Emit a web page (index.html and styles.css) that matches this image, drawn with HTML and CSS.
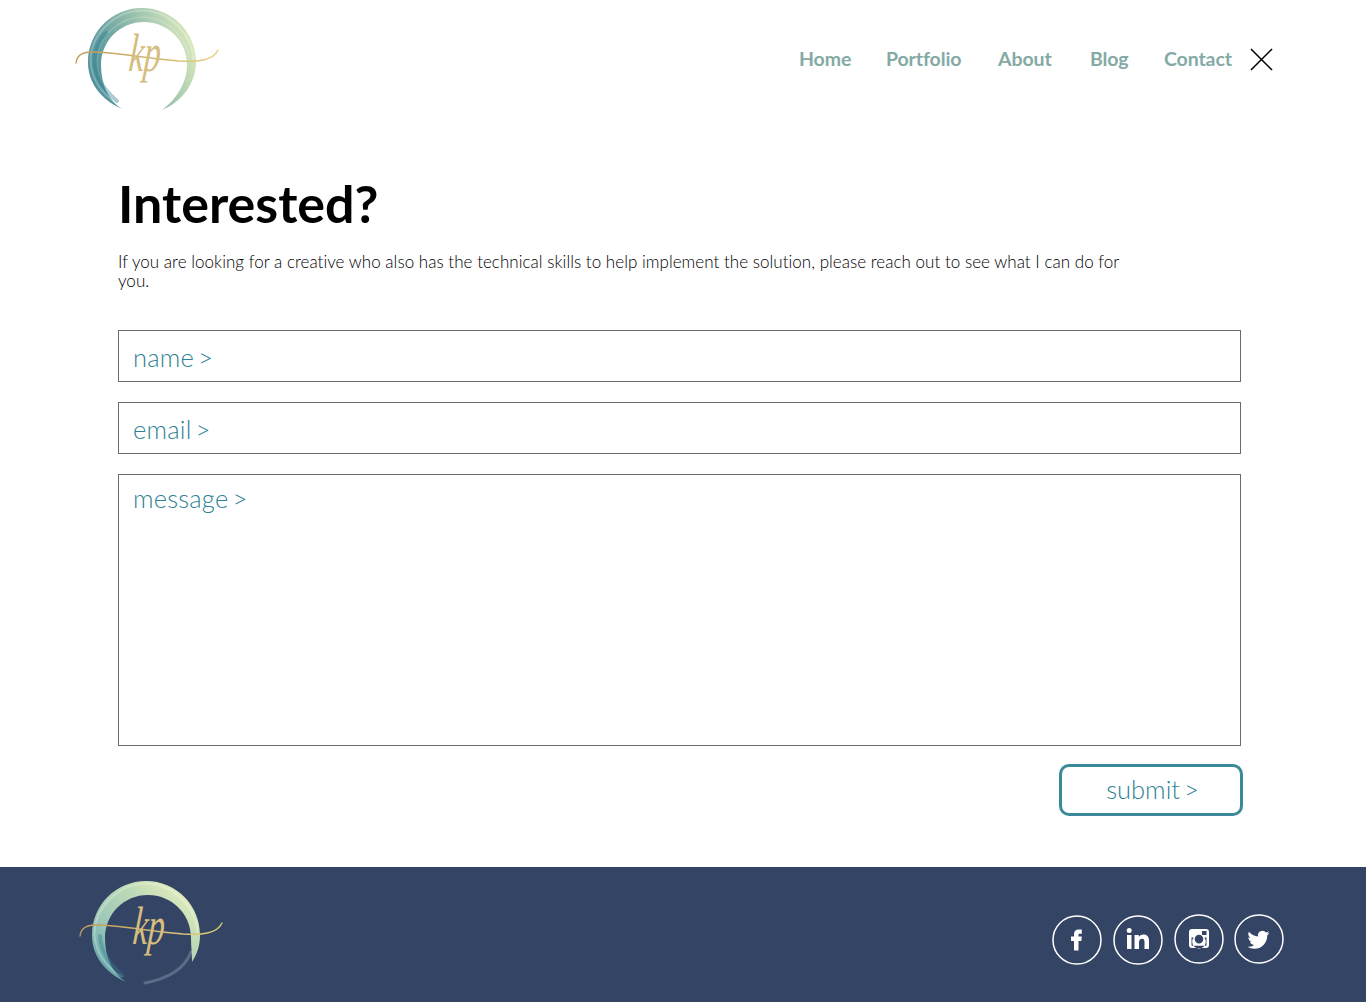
FILE: index.html
```html
<!DOCTYPE html>
<html lang="en">
<head>
<meta charset="utf-8">
<title>Contact</title>
<link rel="stylesheet" href="styles.css">
</head>
<body>
<header class="site-header">
  <a class="logo" href="#" aria-label="kp">
    <svg class="logo-svg" viewBox="0 0 146 104" width="146" height="104">
      <defs>
        <linearGradient id="ringA" x1="0" y1="0.7" x2="1" y2="0.35">
          <stop offset="0" stop-color="#4a8e99"/>
          <stop offset="0.3" stop-color="#6ea5a3"/>
          <stop offset="0.65" stop-color="#a5c9b0"/>
          <stop offset="1" stop-color="#dce9bd"/>
        </linearGradient>
        <linearGradient id="goldA" x1="0" y1="0" x2="1" y2="0">
          <stop offset="0" stop-color="#c09a55"/>
          <stop offset="0.55" stop-color="#d3b976"/>
          <stop offset="1" stop-color="#e3cf75"/>
        </linearGradient>
      </defs>
      <path class="ring-fill-a" d="M47 102C25 92 13 75 13 55C13 25 37 1 67 1C97 1 121 25 121 55C121 76 107 95 87 103C102 92 112 75 112 58C112 33 92 15 69 15C45 15 26 34 26 58C26 78 34 94 47 102Z"/>
      <path class="ring-streak" d="M43 97C27 87 17 73 15.500 55C15 28 39 4 67 3.500C93 3.500 118 26 118.500 55"/>
      <path class="ring-streak ring-streak-thin" d="M39 90C28 80 23 70 22 56C22 30 43 11 67 10C90 10 110 28 114 50"/>
      <path class="ring-streak-dark" d="M42 94C28 82 20 70 20 52C21 40 25 32 31 26"/>
      <path class="swash-a" d="M1 56C2 48 7 45 16 45C30 45 45 47 60 49C74 51 92 53 104 54C122 55 138 54 143 43"/>
      <text class="kp-text" x="0" y="0" transform="translate(53 64) scale(.62 1) skewX(-8)">kp</text>
    </svg>
  </a>
  <nav class="nav">
    <a class="nav-link" href="#">Home</a>
    <a class="nav-link" href="#">Portfolio</a>
    <a class="nav-link" href="#">About</a>
    <a class="nav-link" href="#">Blog</a>
    <a class="nav-link" href="#">Contact</a>
    <svg class="close-icon" viewBox="0 0 24 24" width="23" height="23"><path d="M1 1L23 23M23 1L1 23"/></svg>
  </nav>
</header>

<main class="main">
  <h1 class="title">Interested?</h1>
  <p class="intro">If you are looking for a creative who also has the technical skills to help implement the solution, please reach out to see what I can do for you.</p>
  <form class="form">
    <input class="field" type="text" placeholder="name &gt;">
    <input class="field" type="email" placeholder="email &gt;">
    <textarea class="field field-area" placeholder="message &gt;"></textarea>
    <button class="submit" type="button">submit &gt;</button>
  </form>
</main>

<footer class="site-footer">
  <a class="logo" href="#" aria-label="kp">
    <svg class="logo-svg" viewBox="0 0 146 104" width="146" height="104">
      <defs>
        <linearGradient id="ringB" x1="0.1" y1="0.95" x2="0.85" y2="0.1">
          <stop offset="0" stop-color="#5da0a6"/>
          <stop offset="0.35" stop-color="#9cc8b8"/>
          <stop offset="0.7" stop-color="#bcd9b6"/>
          <stop offset="1" stop-color="#e2ecbd"/>
        </linearGradient>
        <linearGradient id="goldB" x1="0" y1="0" x2="1" y2="0">
          <stop offset="0" stop-color="#c09a55"/>
          <stop offset="0.55" stop-color="#d3b976"/>
          <stop offset="1" stop-color="#e3cf75"/>
        </linearGradient>
      </defs>
      <path class="ring-tail" d="M112 72C106 88 92 98 66 103"/>
      <path class="ring-fill-b" d="M47 102C25 92 13 75 13 55C13 25 37 1 67 1C97 1 121 25 121 55C121 66 118 74 113 82C113 74 112 66 112 58C112 33 92 15 69 15C45 15 26 34 26 58C26 78 34 94 47 102Z"/>
      <path class="ring-streak" d="M43 97C27 87 17 73 15.500 55C15 28 39 4 67 3.500C93 3.500 118 26 118.500 55"/>
      <path class="ring-streak-dark" d="M44 96C30 84 22 72 21 56"/>
      <path class="swash-b" d="M1 56C2 48 7 45 16 45C30 45 45 47 60 49C74 51 92 53 104 54C122 55 138 54 143 43"/>
      <text class="kp-text" x="0" y="0" transform="translate(53 64) scale(.62 1) skewX(-8)">kp</text>
    </svg>
  </a>
  <div class="social">
    <a class="social-link" href="#" aria-label="Facebook">
      <svg viewBox="0 0 50 50" width="50" height="50"><circle class="social-ring" cx="25" cy="25" r="24"/><path class="social-glyph" d="M22 35.500V26h-3v-4.500h3V19c0-3 1.800-4.500 4.500-4.500h3.300v4.200h-2.100c-1 0-1.200.4-1.200 1.200v1.600h3.300l-.5 4.500h-2.800v9.500z"/></svg>
    </a>
    <a class="social-link" href="#" aria-label="LinkedIn">
      <svg viewBox="0 0 50 50" width="50" height="50"><circle class="social-ring" cx="25" cy="25" r="24"/><path class="social-glyph" d="M14 20h4.500v14H14zM16.200 13a2.500 2.500 0 1 1 0 5 2.500 2.500 0 0 1 0-5zM21.500 20h4.300v2c.8-1.400 2.400-2.400 4.500-2.400 4.200 0 5.700 2.500 5.700 6.500V34h-4.500v-7c0-1.900-.5-3.300-2.300-3.300-2 0-3.200 1.300-3.200 3.500V34h-4.500z"/></svg>
    </a>
    <a class="social-link social-link-up" href="#" aria-label="Instagram">
      <svg viewBox="0 0 50 50" width="50" height="50"><circle class="social-ring" cx="25" cy="25" r="24"/><path class="social-glyph" fill-rule="evenodd" d="M18 15h14a3 3 0 0 1 3 3v13a3 3 0 0 1-3 3H18a3 3 0 0 1-3-3V18a3 3 0 0 1 3-3zM28 17v4h4.500v-4zM17.500 23.500v7.500c0 .5.300.8.800.8h13.400c.5 0 .8-.3.800-.8v-7.500h-2.200a6.800 6.800 0 1 1-10.600 0zM25 20.800a4.300 4.300 0 1 0 0 8.600 4.300 4.300 0 0 0 0-8.600z"/></svg>
    </a>
    <a class="social-link social-link-up social-link-last" href="#" aria-label="Twitter">
      <svg viewBox="0 0 50 50" width="50" height="50"><circle class="social-ring" cx="25" cy="25" r="24"/><path class="social-glyph" d="M35.500 19.100c-.8.400-1.700.6-2.600.7.900-.6 1.700-1.400 2-2.500-.9.500-1.900.9-2.900 1.100a4.500 4.500 0 0 0-7.800 4.100c-3.800-.2-7.100-2-9.300-4.700-1.200 2-.6 4.700 1.400 6-.7 0-1.400-.2-2-.6 0 2.200 1.500 4 3.600 4.500-.7.200-1.400.2-2 .1.600 1.800 2.200 3.100 4.200 3.100a9 9 0 0 1-6.700 1.900c2 1.300 4.400 2 6.900 2 8.400 0 13.100-7 12.900-13.400.9-.6 1.700-1.400 2.300-2.300z"/></svg>
    </a>
  </div>
</footer>
</body>
</html>
```
FILE: styles.css
```css
* { box-sizing: border-box; }
html, body { margin: 0; padding: 0; }
body {
  background: #fff;
  color: #000;
  font-family: "Lato", "Liberation Sans", sans-serif;
  height: 1002px;
  display: flex;
  flex-direction: column;
}
a { text-decoration: none; color: inherit; }

.site-header {
  height: 136px;
  padding: 7px 93px 0 75px;
  display: flex;
  justify-content: space-between;
  align-items: flex-start;
}
.logo { display: block; }
.logo-svg { display: block; overflow: visible; }
.ring-fill-a { fill: url(#ringA); }
.ring-fill-b { fill: url(#ringB); }
.ring-tail { fill: none; stroke: #5b6b88; stroke-width: 3; stroke-linecap: round; }
.ring-streak { fill: none; stroke: #fff; stroke-opacity: .25; stroke-width: 2; }
.ring-streak-thin { stroke-opacity: .18; stroke-width: 1.500; }
.ring-streak-dark { fill: none; stroke: #2f7f90; stroke-opacity: .4; stroke-width: 4; stroke-linecap: round; }
.swash-a, .swash-b { fill: none; stroke-width: 1.300; stroke-linecap: round; }
.swash-a { stroke: url(#goldA); }
.swash-b { stroke: url(#goldB); }
.kp-text {
  font-family: "Liberation Serif", serif;
  font-style: italic;
  font-size: 54px;
  fill: #d6bd80;
}

.nav {
  margin-top: 40px;
  display: grid;
  grid-template-columns: 87px 112px 92px 74px 86px 23px;
  align-items: center;
}
.nav-link {
  font-size: 19.500px;
  font-weight: 700;
  letter-spacing: -.1px;
  color: #85aaa5;
  line-height: 24px;
}
.close-icon { display: block; }
.close-icon path { fill: none; stroke: #000; stroke-width: 1.600; }

.main {
  flex: 1;
  padding: 0 125px 0 118px;
}
.title {
  margin: 35px 0 0;
  font-size: 52px;
  line-height: 64px;
  font-weight: 700;
}
.intro {
  margin: 17px 0 0;
  max-width: 1010px;
  font-size: 17px;
  letter-spacing: .03px;
  line-height: 19px;
  font-weight: 300;
}
.form {
  margin-top: 40px;
  display: flex;
  flex-direction: column;
  gap: 20px;
}
.field {
  display: block;
  width: 100%;
  height: 52px;
  border: 1px solid #6b6b6b;
  border-radius: 0;
  padding: 1px 14px 0;
  background: #fff;
  font-family: inherit;
  font-size: 25.500px;
  letter-spacing: .2px;
  word-spacing: -3px;
  font-weight: 300;
  color: #2f8294;
  outline: none;
}
.field::placeholder { color: #2f8294; opacity: 1; }
.field-area {
  height: 272px;
  padding-top: 8px;
  resize: none;
}
.submit {
  align-self: flex-end;
  margin: -2px -2px 0 0;
  padding: 0 0 2px 3px;
  width: 184px;
  height: 52px;
  border: 3px solid #3a8a99;
  border-radius: 10px;
  background: #fff;
  font-family: inherit;
  font-size: 25.500px;
  word-spacing: -3px;
  font-weight: 300;
  color: #2f8294;
}

.site-footer {
  height: 135px;
  background: #344464;
  padding: 13px 82px 0 79px;
  display: flex;
  justify-content: space-between;
  align-items: flex-start;
}
.social {
  margin-top: 35px;
  display: flex;
  gap: 11px;
}
.social-link { display: block; width: 50px; height: 50px; }
.social-link svg { display: block; }
.social-link-up { margin-top: -1px; }
.social-link-last { margin-left: -1px; }
.social-ring { fill: none; stroke: #fff; stroke-width: 1.500; }
.social-glyph { fill: #fff; }
```
